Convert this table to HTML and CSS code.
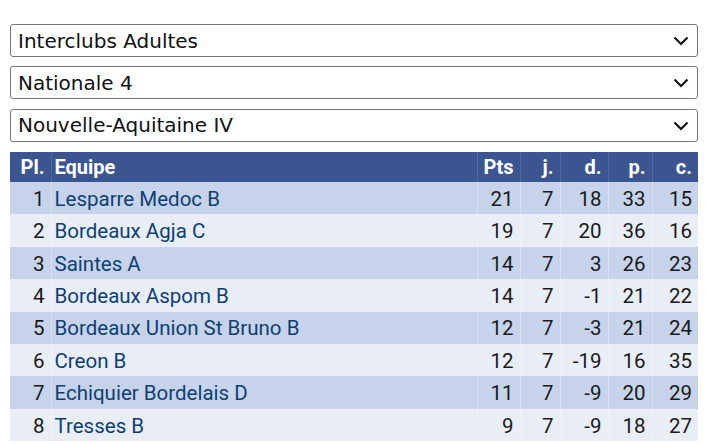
FILE: index.html
```html
<!DOCTYPE html>
<html lang="fr">
<head>
<meta charset="utf-8">
<title>Classement</title>
<link rel="stylesheet" href="styles.css">
</head>
<body>
<div class="page">
  <div class="filters">
    <div class="select-wrap">
      <select class="select"><option>Interclubs Adultes</option></select>
      <svg class="chev" viewBox="0 0 16 10" width="16" height="10"><path d="M1.5 1.5 L8 8 L14.5 1.5" fill="none" stroke="#111" stroke-width="2.2"/></svg>
    </div>
    <div class="select-wrap">
      <select class="select"><option>Nationale 4</option></select>
      <svg class="chev" viewBox="0 0 16 10" width="16" height="10"><path d="M1.5 1.5 L8 8 L14.5 1.5" fill="none" stroke="#111" stroke-width="2.2"/></svg>
    </div>
    <div class="select-wrap">
      <select class="select"><option>Nouvelle-Aquitaine IV</option></select>
      <svg class="chev" viewBox="0 0 16 10" width="16" height="10"><path d="M1.5 1.5 L8 8 L14.5 1.5" fill="none" stroke="#111" stroke-width="2.2"/></svg>
    </div>
  </div>
  <table class="standings">
    <colgroup>
      <col class="c-pl"><col class="c-team"><col class="c-pts"><col class="c-j"><col class="c-d"><col class="c-p"><col class="c-c">
    </colgroup>
    <thead>
      <tr><th>Pl.</th><th class="left">Equipe</th><th>Pts</th><th>j.</th><th>d.</th><th>p.</th><th>c.</th></tr>
    </thead>
    <tbody>
      <tr><td>1</td><td class="team"><a href="#">Lesparre Medoc B</a></td><td>21</td><td>7</td><td>18</td><td>33</td><td>15</td></tr>
      <tr><td>2</td><td class="team"><a href="#">Bordeaux Agja C</a></td><td>19</td><td>7</td><td>20</td><td>36</td><td>16</td></tr>
      <tr><td>3</td><td class="team"><a href="#">Saintes A</a></td><td>14</td><td>7</td><td>3</td><td>26</td><td>23</td></tr>
      <tr><td>4</td><td class="team"><a href="#">Bordeaux Aspom B</a></td><td>14</td><td>7</td><td>-1</td><td>21</td><td>22</td></tr>
      <tr><td>5</td><td class="team"><a href="#">Bordeaux Union St Bruno B</a></td><td>12</td><td>7</td><td>-3</td><td>21</td><td>24</td></tr>
      <tr><td>6</td><td class="team"><a href="#">Creon B</a></td><td>12</td><td>7</td><td>-19</td><td>16</td><td>35</td></tr>
      <tr><td>7</td><td class="team"><a href="#">Echiquier Bordelais D</a></td><td>11</td><td>7</td><td>-9</td><td>20</td><td>29</td></tr>
      <tr><td>8</td><td class="team"><a href="#">Tresses B</a></td><td>9</td><td>7</td><td>-9</td><td>18</td><td>27</td></tr>
    </tbody>
  </table>
</div>
</body>
</html>
```

FILE: styles.css
```css
* { box-sizing: border-box; }
html, body { margin: 0; padding: 0; background: #fff; }
body { font-family: Roboto, "Noto Sans", sans-serif; color: #1a1a1a; }
.page { padding: 24px 7px 0 10px; }
.filters { display: flex; flex-direction: column; gap: 9.3px; margin-bottom: 10.5px; }
.select-wrap { position: relative; width: 688px; }
.select {
  -webkit-appearance: none; appearance: none;
  display: block; width: 100%; height: 33px;
  margin: 0; padding: 0 30px 0 7px;
  font-family: "DejaVu Sans", sans-serif; font-size: 20px; color: #111;
  background: #fff; border: 1px solid #767676; border-radius: 3px;
}
.chev { position: absolute; right: 9px; top: 12px; pointer-events: none; }
.standings {
  width: 688px; table-layout: fixed; border-collapse: collapse; border-spacing: 0;
}
.c-pl { width: 41px; } .c-team { width: 426px; } .c-pts { width: 43px; }
.c-j { width: 40px; } .c-d { width: 48px; } .c-p { width: 44px; } .c-c { width: 46px; }
.standings th {
  background: #3b5590; color: #fff; font-weight: 700; font-size: 20px;
  height: 30px; padding: 0 6px 0 3px; text-align: right; line-height: 24px;
  border-right: 1px solid rgba(255,255,255,0.12);
}
.standings th.left { text-align: left; }
.standings td {
  font-size: 20.5px; height: 32.4px; padding: 1px 6px 0 3px; text-align: right; line-height: 24px;
  border-right: 1px solid rgba(255,255,255,0.3);
}
.standings th:last-child, .standings td:last-child { border-right: none; }
.standings tbody tr:nth-child(odd) td { background: #c6d3ea; }
.standings tbody tr:nth-child(even) td { background: #e9edf6; }
.standings td.team { text-align: left; }
.standings td.team a { color: #0e3f74; text-decoration: none; }
```
